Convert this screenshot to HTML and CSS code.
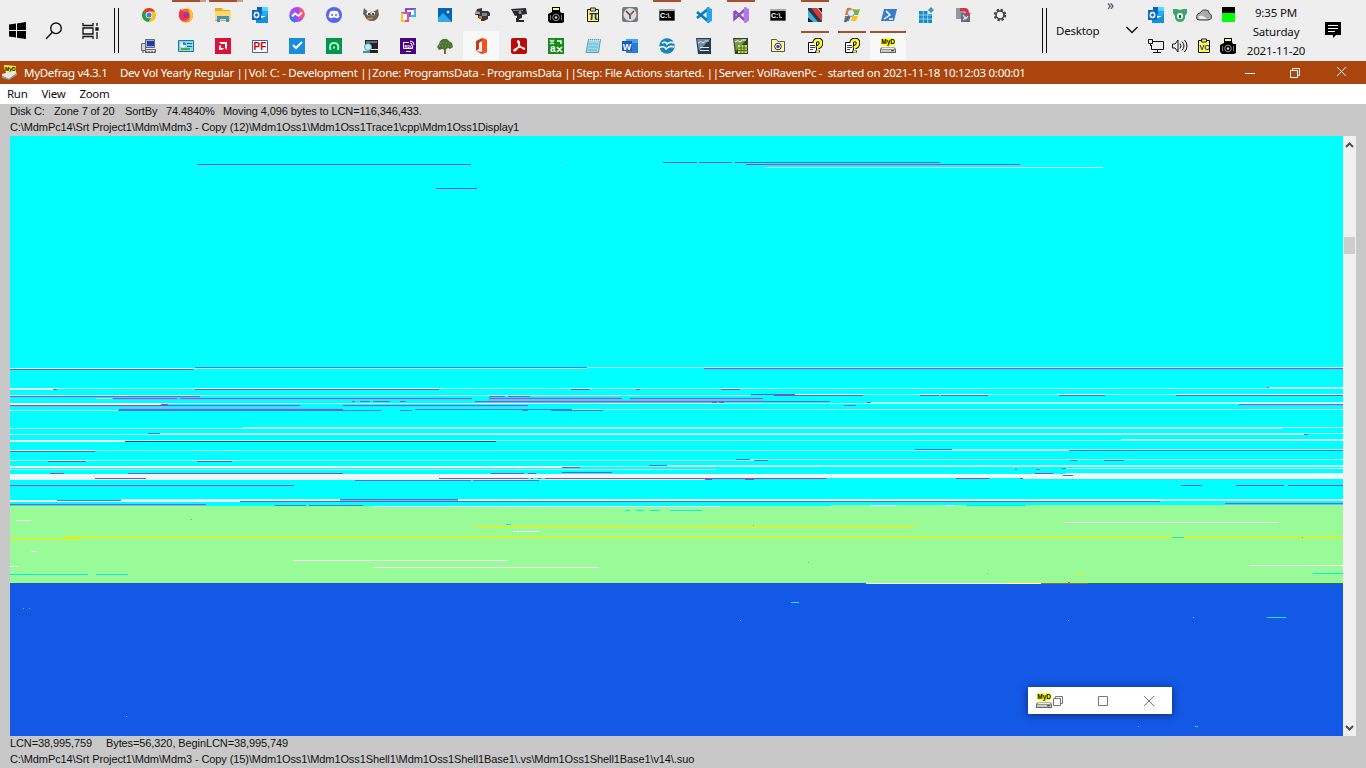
FILE: index.html
```
<!DOCTYPE html>
<html lang="en">
<head>
<meta charset="utf-8">
<title>MyDefrag v4.3.1</title>
<link rel="stylesheet" href="styles.css">
</head>
<body>
<svg class="defs" width="16" height="16">
  <symbol id="outlook" viewBox="0 0 16 16"><path fill="#28a8ea" d="M5 0h11v9H5z"/><path fill="#0364b8" d="M5 0h5v7H5z"/><path fill="#50d9ff" d="M10 0h6v4h-6z"/><path fill="#1490df" d="M4 8l6 3 6-3v8H4z"/><path fill="#0f68c4" d="M0 3h9v10H0z"/><ellipse cx="4.500" cy="8" rx="2.200" ry="2.500" fill="none" stroke="#fff" stroke-width="1.400"/></symbol>
  <symbol id="cmd" viewBox="0 0 16 16"><path fill="#aaa" d="M0 2h16v12H0z"/><path d="M.5 4h15v9.500H.5z"/><text x="1" y="11" class="t" font-size="7" fill="#fff">C:\.</text></symbol>
  <symbol id="photocam" viewBox="0 0 16 16"><path d="M4 0h8v4l1 2h3v9l-2 1H2l-2-2V7l4-2z"/><path fill="#ffff50" d="M5 1h6v2H5z"/><path fill="#777" d="M2 8h1v5H2zM13 8h1v5h-1z"/><circle cx="8" cy="10.500" r="3.300" stroke="#999"/><circle cx="8" cy="10.500" r="1.200" fill="#ddd"/></symbol>
  <symbol id="clip" viewBox="0 0 16 16"><path stroke="#111" fill="#ff3" d="M2.500 2.500h11v12h-11z"/><path fill="#ddd" stroke="#222" d="M5.500 1h5v3h-5z"/></symbol>
  <symbol id="help" viewBox="0 0 16 16"><path fill="#fff" stroke="#000" d="M1.500 4.500h8v10h-8z"/><path stroke="#444" d="M3 7.500h5M3 9.500h5M3 11.500h3"/><path fill="none" stroke="#000" stroke-width="4.500" d="M7.500 5Q8 2 11 2t3 3-3 4v1M10.500 12.500v2"/><path fill="none" stroke="#ff2" stroke-width="2.700" d="M7.500 5Q8 2 11 2t3 3-3 4v1M10.500 12.500v2"/></symbol>
  <symbol id="myd" viewBox="0 0 16 16"><rect x="1" y="0" width="14" height="8" rx="3" fill="#ff1"/><text x="1.300" y="6" class="t" font-size="6.500">MyD</text><path d="M1 9.500h14l1 2V15H0v-3.500z" fill="#666"/><path d="M2 10h12l.5 1h-13z" fill="#eee"/><path d="M1 11.500h14V14H1z" fill="#c9cbc4"/><path stroke="#333" d="M11 12.700h3"/></symbol>
</svg>

<header class="taskbar">
  <div class="system">
    <svg width="17" height="17" viewBox="0 0 17 17"><path d="M0 2.500l7-1V8H0zM8 1.400L17 0v8H8zM0 9h7v6.500l-7-1zM8 9h9v8l-9-1.300z"/></svg>
    <svg width="18" height="18" viewBox="0 0 18 18" fill="none" stroke="#111" stroke-width="1.400"><circle cx="11" cy="6.300" r="5.300"/><path d="M7.300 10.300L1 17"/></svg>
    <svg width="18" height="16" viewBox="0 0 18 16" fill="none" stroke="#111" stroke-width="1.300"><path d="M1 0v2.500h10V0M1 16v-2.500h10V16M1 5h10v6H1zM15 0v3M15 9v7"/><path fill="#111" d="M14 5h2v2h-2z"/></svg>
  </div>
  <i class="grip"></i>
  <div class="icons">
    <span><svg viewBox="0 0 16 16"><circle cx="8" cy="8" r="7" fill="#fbc116"/><path fill="#e33b2e" d="M8 8L2 4.500A7 7 0 0 1 14 4.500H8z"/><path fill="#28994b" d="M8 8L2 4.500A7 7 0 0 0 7.500 15L11 9z"/><circle cx="8" cy="8" r="3.300" fill="#fff"/><circle cx="8" cy="8" r="2.500" fill="#3e7ee8"/></svg></span>
    <span class="open more"><svg viewBox="0 0 16 16"><circle cx="8" cy="8.500" r="7" fill="#ff6a18"/><path fill="#ffc629" d="M9 0q5 3 6 8c0 5-4 7-7 7 3-1 5-4 4-7q0-4-3-8"/><circle cx="7.500" cy="8.500" r="3.500" fill="#7943c5"/><path fill="#f6304c" d="M1 6q1-4 2-4 1 3 5 3-3 2-3 4 2 3 6 1-3 5-8 3-3-3-2-7"/></svg></span>
    <span class="open more"><svg viewBox="0 0 16 16"><path fill="#e9a725" d="M0 1h7l1 2h7v11H0z"/><path fill="#ffd966" d="M0 4h16v9H0z"/><path fill="#3c91d0" d="M2 15V9h12v6h-3v-3H5v3z"/></svg></span>
    <span><svg><use href="#outlook"/></svg></span>
    <span><svg viewBox="0 0 16 16"><circle cx="8" cy="7.500" r="7.500" fill="#a44cfb"/><path fill="#fa5674" d="M10 0q7 3 5 10l-5 2z"/><path fill="#2d7cf6" d="M0 8q1 7 5 7v1l3-2-5-5z"/><path fill="none" stroke="#fff" stroke-width="1.800" d="M3 9.500l3-3 3.500 2.300L13 5.500"/></svg></span>
    <span><svg viewBox="0 0 16 16"><circle cx="8" cy="8" r="8" fill="#5865f2"/><path fill="#fff" d="M4 4.500l3-.7h2l3 .7 1.500 5.500-3 1.500-1-1h-3l-1 1-3-1.500z"/><circle cx="6" cy="8" r="1" fill="#5865f2"/><circle cx="10" cy="8" r="1" fill="#5865f2"/></svg></span>
    <span><svg viewBox="0 0 16 16"><path fill="#66615b" d="M1 1l4 4q5 1 10-3l1 6q-2 6-7 6Q3 14 2 9L0 7z"/><circle cx="5.500" cy="6.500" r="2" fill="#fff"/><circle cx="10" cy="6.500" r="2" fill="#fff"/><circle cx="6" cy="7" r="1"/><circle cx="10" cy="7" r="1"/><path stroke="#e58a20" stroke-width="1.500" d="M4 12l6-1"/></svg></span>
    <span><svg viewBox="0 0 16 16" fill="none"><path fill="#fff" stroke="#8b48df" stroke-width="2" d="M6 2h9v7h-5V6H6z"/><path stroke="#35bde8" stroke-width="2" d="M15 2v7h-5"/><path fill="#fff" stroke="#e5509a" stroke-width="2" d="M2 6h6v8H2z"/><path stroke="#eec824" stroke-width="2" d="M2 6v8h3"/></svg></span>
    <span><svg viewBox="0 0 16 16"><path fill="#0664b8" d="M1 1h14v14H1z"/><path fill="#2daced" d="M1 11l5-5 9 9H1z"/><circle cx="11" cy="5" r="1.200" fill="#fff"/></svg></span>
    <span><svg viewBox="0 0 16 16"><path fill="#39363b" d="M3 2l5-1v3h6l2 2v3h-2v3l-4 2H7v-3H4V8H1z"/><path fill="#b9956d" d="M1 4l5 1v2H2z"/><path fill="#7484a5" d="M8 6h5v3H8z"/><path fill="#c37b2c" d="M5 9h3v3H5z"/></svg></span>
    <span><svg viewBox="0 0 16 16"><path fill="#29292b" d="M0 2l15-1 1 6-12 2zM6 8h5v3l-3 1v1h5v2H5v-4h1z"/><path fill="#777" d="M2 3h10v1H2z"/><circle cx="9" cy="5.500" r="1.500" fill="#99a"/></svg></span>
    <span><svg><use href="#photocam"/></svg></span>
    <span><svg viewBox="0 0 16 16"><use href="#clip" width="16" height="16"/><text x="4" y="13" class="t" font-size="12" fill="#1919d0">π</text></svg></span>
    <span><svg viewBox="0 0 16 16"><rect width="16" height="15" rx="2" fill="#787b80"/><circle cx="8" cy="7.500" r="6.500" fill="#ddd"/><path fill="none" stroke="#444" stroke-width="1.500" d="M4 4l4 4 4-4M8 8v4"/><path stroke="#e36631" d="M8 8l4-3"/></svg></span>
    <span class="open"><svg><use href="#cmd"/></svg></span>
    <span><svg viewBox="0 0 16 16"><path fill="none" stroke="#087bc2" stroke-width="2.700" d="M1 5l11 9V2L1 11"/><path fill="#24a6ef" d="M11 0l5 2v12l-5 2z"/></svg></span>
    <span class="open"><svg viewBox="0 0 16 16"><path fill="none" stroke="#8a4fc5" stroke-width="2.500" d="M1.500 4v8L12 2.500v11L1.500 4"/><path fill="#b17be8" d="M11 0l5 2v12l-5 2z"/></svg></span>
    <span><svg><use href="#cmd"/></svg></span>
    <span class="open"><svg viewBox="0 0 16 16"><path fill="#24394a" d="M1 1h5l9 9v5h-5L1 6z"/><path fill="#d83c31" d="M4 1h6l5 6v8z"/><path fill="#3cb1d9" d="M1 3l10 12H5L1 9z"/><path fill="#16202a" d="M1 10l5 5H1zM11 1h4v5z"/></svg></span>
    <span><svg viewBox="0 0 16 16"><path fill="#f26a29" d="M3 1q3-1 5 1L7 8H1z"/><path fill="#75b72a" d="M9 2q4 1 7 0l-2 6H8z"/><path fill="#3c8dd2" d="M1 9h6l-2 5-5 1z"/><path fill="#ffbf21" d="M8 9h6l-2 5H7z"/><circle cx="7" cy="6" r="3.500" fill="#dcf3ff" stroke="#8b999f"/><path stroke="#81562e" stroke-width="2" d="M5 9l-4 6"/></svg></span>
    <span><svg viewBox="0 0 16 16"><path fill="#397bd0" d="M3 2h13l-3 12H0z"/><path fill="none" stroke="#fff" stroke-width="1.500" d="M5 4l4 4-6 4M8 12h4"/></svg></span>
    <span><svg viewBox="0 0 16 16"><path fill="#168dca" d="M1 4h9v3h4v9H1z"/><path fill="#3295c4" d="M13 0l3 3-3 3-3-3z"/><path stroke="#bceaff" stroke-width=".7" d="M1 8h13M1 12h13M5.300 4v12M9.700 4v12"/></svg></span>
    <span><svg viewBox="0 0 16 16"><path fill="#9297a4" d="M1 1h8v11H1z"/><path fill="#666c7e" d="M6 6h9v9H6z"/><path fill="#d7344c" d="M5 1h6q3 1 3 5h2l-3 3-4-3h2q0-2-6-2z"/><path fill="none" stroke="#ddd" stroke-width="1.300" d="M8 8l3 4 2-3M8 13l3-3"/></svg></span>
    <span><svg viewBox="0 0 16 16"><circle cx="8" cy="8" r="5" fill="none" stroke="#444" stroke-width="2.500" stroke-dasharray="2.300 1.627"/><circle cx="8" cy="8" r="3.900" fill="none" stroke="#444" stroke-width="1.500"/></svg></span>

    <span><svg viewBox="0 0 16 16"><path fill="#a9b3c1" stroke="#667" d="M4.500 1.500h9v8h-9z"/><path fill="#183dbd" d="M6 3h7v5H6z"/><path fill="#d6d6cc" stroke="#667" d="M.5 5.500h4v7h-4zM4.500 11.500h10v3h-10z"/><path stroke="#445" stroke-dasharray="2 1" d="M1 14h13"/></svg></span>
    <span><svg viewBox="0 0 16 16"><path fill="#86d8f3" stroke="#1878ac" d="M.5 2.500h15v11H.5z"/><circle cx="5" cy="7" r="2.500" fill="#fff"/><path fill="#2080bf" d="M5 4a3 3 0 0 1 3 3H5z"/><path stroke="#255e91" d="M9 5.500h5M9 8.500h5"/><path stroke="#59a72a" stroke-width="2" d="M3 11h9"/></svg></span>
    <span><svg viewBox="0 0 16 16"><path fill="#db1238" d="M0 0h16v16H0z"/><path fill="#fff" d="M4 4h8v8l-2-2V6H6zM4 8l2-1v3h3l-2 2H4z"/></svg></span>
    <span><svg viewBox="0 0 16 16"><path fill="#fff" stroke="#3269b4" d="M.5 2.500h15v12H.5z"/><text x="1.500" y="12" class="t" font-size="10" fill="#d00">PF</text></svg></span>
    <span><svg viewBox="0 0 16 16"><path fill="#188ddb" d="M0 0h16v16H0z"/><path fill="none" stroke="#fff" stroke-width="2" d="M4 7l3 3 6-6"/></svg></span>
    <span><svg viewBox="0 0 16 16"><path fill="#00964b" d="M0 0h16v16H0z"/><path fill="none" stroke="#aef2c9" stroke-width="2" d="M4.500 12q-2-7 3.500-7t4 7M8 8.500v2"/></svg></span>
    <span><svg viewBox="0 0 16 16"><path fill="#202329" d="M2 2h13v9H2zM5 12h10v3H5z"/><path fill="#666d72" d="M3 3h11v2H3z"/><circle cx="5" cy="9" r="3.500" fill="#bcecfa" stroke="#6898a7"/><path fill="#4298a8" d="M0 13h7v2H0z"/></svg></span>
    <span><svg viewBox="0 0 16 16"><path fill="#4b0082" d="M0 0h16v16H0z"/><path fill="none" stroke="#fff" d="M9 4.500H3.500v6h9V8M6 13.500h5M10 5q2 0 2 2M10 3q4 0 4 4"/><text x="4.500" y="9.500" class="t" font-size="4" fill="#fff">RDC</text></svg></span>
    <span><svg viewBox="0 0 16 16"><path stroke="#80613c" stroke-width="2" d="M8 7v9"/><path fill="#4d7432" d="M6 1l4 0 2 2 3 2 1 4-3 2-2-1-3 2-3-1-3 1-2-3 2-3 1-3z"/><path stroke="#8ca55b" stroke-dasharray="1 2" d="M3 5h10M2 8h12"/></svg></span>
    <span class="lit"><svg viewBox="0 0 16 16"><path fill="#c93a16" d="M9 0l5 2v12l-5 2-6-3 6 1V3L6 5v6l-3 2V3z"/><path fill="#f4511e" d="M9 0l5 2v12l-5 2z"/></svg></span>
    <span><svg viewBox="0 0 16 16"><rect width="16" height="16" rx="2" fill="#b90b08"/><path fill="none" stroke="#fff" stroke-width="1.300" d="M7 3c3 0 1 6-2 9-2 2-3 0-1-1 3-2 7-2 9-1 2 2-2 1-4-2C7 5 6 3 7 3"/></svg></span>
    <span><svg viewBox="0 0 16 16"><path fill="#168a1b" d="M0 0h16v16H0z"/><text x="2" y="14" class="t" font-size="10" fill="#fff">a</text><path fill="none" stroke="#fff" stroke-width="1.500" d="M2 2l4 4M6 2L2 6M9 3h4v3M9 9l5 5M14 9l-5 5"/></svg></span>
    <span><svg viewBox="0 0 16 16"><path fill="#9bdbe9" stroke="#6a9aaa" d="M3.500 1.500h12l-2 13H1z"/><path stroke="#fff" stroke-dasharray="1 1" d="M4 2h11"/><path stroke="#68b5ca" d="M4 6h9M3.500 9h9M3 12h9"/></svg></span>
    <span><svg viewBox="0 0 16 16"><path fill="#2b7cd3" d="M4 1h12v14H4z"/><path fill="#41a5ee" d="M4 1h12v4H4z"/><path fill="#185abd" d="M0 3h10v10H0z"/><text x=".7" y="11.500" class="t" font-size="9" fill="#fff">W</text></svg></span>
    <span><svg viewBox="0 0 16 16"><circle cx="8" cy="8" r="7.700" fill="#1685bb"/><path fill="none" stroke="#fff" stroke-width="1.600" d="M3 5q4-2 5 1 3-3 7-1M0 10q5-3 7 1 4-4 8-2"/></svg></span>
    <span><svg viewBox="0 0 16 16"><path fill="#263d4d" d="M0 0h15v16H2z"/><path fill="#738da1" d="M1 1h13L3 13z"/><path stroke="#dce6eb" d="M4 9.500h9M4 12.500h9M2 5q3-3 5 0 2-3 6-2" fill="none"/></svg></span>
    <span><svg viewBox="0 0 16 16"><path fill="#32442b" d="M0 0h15v16H2z"/><path fill="#789456" d="M1 1h13L3 13z"/><path fill="#c7e23f" d="M5 7h9v8H5z"/><path stroke="#426129" d="M5 10h9M5 12.500h9M8 7v8M11 7v8"/><path fill="none" stroke="#fff" d="M2 4q3-3 5 0 2-3 6-2"/></svg></span>
    <span><svg viewBox="0 0 16 16"><path fill="#ffff9b" stroke="#555" d="M1.500 4V1.500h5L8 3.500h6.500v10h-13z"/><circle cx="8" cy="8.500" r="3.300" fill="#fff" stroke="#223"/><circle cx="8" cy="8.500" r="1.800" fill="#3b49c2"/></svg></span>
    <span class="open"><svg><use href="#help"/></svg></span>
    <span class="open"><svg><use href="#help"/></svg></span>
    <span class="open lit"><svg><use href="#myd"/></svg></span>
  </div>
  <i class="grip second"></i>
  <span class="desktop">Desktop</span>
  <svg class="chevron" width="12" height="8" viewBox="0 0 12 8" fill="none" stroke="#111" stroke-width="1.300"><path d="M.5 1L6 6.500 11.500 1"/></svg>
  <span class="overflow">»</span>
  <div class="tray">
    <svg><use href="#outlook"/></svg>
    <svg viewBox="0 0 16 16"><path fill="#38a969" d="M1 2h4l3 1 3-1h4v4l-2 3v2q-1 4-5 4T3 11V9L1 6z"/><circle cx="8" cy="9" r="3" fill="#fff"/><path fill="#235d3d" d="M7 8h2v3H7z"/></svg>
    <svg viewBox="0 0 16 16"><path fill="#aaa" stroke="#444" d="M3 13Q0 13 .5 9.500T4 6q2-4 6-3 3 0 3 3 3 1 2.500 5-1 2-3.500 2z"/><path fill="#eee" d="M2 10q3-4 9 2H4z"/></svg>
    <svg viewBox="0 0 16 16"><path d="M2 0h13v6H2z"/><path fill="#0f0" d="M2 6h13v9H2z"/></svg>
    <svg viewBox="0 0 16 16" fill="none" stroke="#111"><path d="M5 3.500h10.500v8H3.500V7M.5 1.500h4v4h-4zM2.500 6v2M9.500 12v2M5 14.500h8"/></svg>
    <svg viewBox="0 0 16 16" fill="none" stroke="#111"><path d="M.5 6H3l3-4v12l-3-4H.5zM8 5.500q2 2.500 0 5M10 3.500q4 4.500 0 9M12.500 2q5 6 0 12"/></svg>
    <svg viewBox="0 0 16 16"><use href="#clip" width="16" height="16"/><text x="3.500" y="12" class="t" font-size="7" fill="#2020c0">VC</text></svg>
    <svg><use href="#photocam"/></svg>
  </div>
  <div class="clock"><span class="time">9:35 PM</span><span class="day">Saturday</span><span class="date">2021-11-20</span></div>
  <svg class="note" width="16" height="16" viewBox="0 0 16 16"><path d="M0 0h16v13h-5l-3 3v-3H0z"/><path stroke="#fff" d="M3 3.500h10M3 6.500h10M3 9.500h7"/></svg>
</header>

<main class="window">
  <div class="titlebar">
    <svg class="appicon" viewBox="0 0 16 16"><path fill="#eef08a" d="M2 0l12 1v7H4z"/><path fill="#ffeb19" d="M2 1h12v5H3z"/><text x="3" y="5.500" class="t" font-size="5">MyD</text><path fill="#e7e7df" d="M0 9l11-3 4 2-8 6-7-3z"/><path fill="#999" d="M0 11l7 3 8-6v2l-8 5-7-2z"/></svg>
    <span class="name">MyDefrag v4.3.1</span><span class="job">Dev Vol Yearly Regular ||Vol: C: - Development ||Zone: ProgramsData - ProgramsData ||Step: File Actions started. ||Server: VolRavenPc -&nbsp; started on 2021-11-18 10:12:03 0:00:01</span>
    <svg class="controls" width="104" height="12" viewBox="0 0 104 12" fill="none" stroke="#fff"><path d="M0 6.500h10M45.500 3.500h7v7h-7zM47.500 3V1.500h7v7H53M92 0l9 9M101 0l-9 9"/></svg>
  </div>
  <nav class="menu"><span>Run</span><span>View</span><span>Zoom</span></nav>
  <section class="status top">
    <p><span class="disk">Disk C:</span><span class="zone">Zone 7 of 20</span><span class="sort">SortBy</span><span class="pct">74.4840%</span><span class="moving">Moving 4,096 bytes to LCN=116,346,433.</span></p>
    <p><span class="path1">C:\MdmPc14\Srt Project1\Mdm\Mdm3 - Copy (12)\Mdm1Oss1\Mdm1Oss1Trace1\cpp\Mdm1Oss1Display1</span></p>
  </section>
  <div class="mapwrap">
    <svg class="map" width="1333" height="600" viewBox="10 136 1333 600" fill="none" shape-rendering="crispEdges">
      <path fill="#0ff" d="M10 136h1333v370H10z"/>
      <path fill="#98fb98" d="M10 506h1333v77H10zM830 505h513v1H830zM96 398h16v1H96z"/>
      <path fill="#1458e6" d="M10 584h1333v152H10z"/>
      <path stroke="#1458e6" d="M10 583.500h1333"/>
      <!-- free clusters -->
      <path stroke="#c9ffff" d="M765 167.500h338M10 368.500h577M587 367.500h756M10 388.500h1333M1268 387.500h75M10 395.500h741M751 394.500h592M10 403.500h1333M868 402.500h475M10 410.500h108M572 409.500h771M10 428.500h1272M243 427.500h1100M10 434.500h1298M160 433.500h1183M10 440.500h1333M1121 439.500h222M10 450.500h1059M952 449.500h391M10 460.500h744M750 459.500h593M10 466.500h1333M667 465.500h676M10 469.500h706M1066 468.500h277M1066 473.500h277M10 500.500h1333M121 499.500h1222M561 160.500h1"/>
      <path fill="#f0f5f8" d="M10 388h43v2H10zM10 403h151v2H10zM10 440h115v2H10zM10 466h552v2H10zM10 474h1333v4H10zM10 478h429v2H10zM439 479h266v1H439zM1023 478h320v1h-320zM10 500h230v2H10z"/>
      <path stroke="#70bdf0" d="M704 369.500h639M10 397.500h190M489 397.500h133M113 399.500h359M489 399.500h133M630 399.500h133M489 400.500h274M475 402.500h237M10 406.500h290M1239 405.500h104M343 406.500h185M119 408.500h224M10 486.500h284M340 500.500h118M1225 504.500h118M10 505.500h196"/>
      <!-- fragmented files -->
      <path stroke="#4b75d8" d="M195 367.500h392M704 368.500h639M10 396.500h190M113 398.500h64M180 398.500h292M489 398.500h133M630 398.500h133M489 396.500h16M508 396.500h22M352 401.500h3M360 401.500h10M373 401.500h17M400 401.500h6M475 401.500h355M168 405.500h132M343 405.500h185M844 405.500h12M1239 404.500h104M119 409.500h224M118 410.500h263M400 410.500h12M415 409.500h157M522 410.500h6M551 410.500h52M148 433.500h12M1304 434.500h4M915 449.500h37M1069 450.500h274M736 459.500h14M754 460.500h14M1070 460.500h7M1104 460.500h20M649 465.500h18M1015 469.500h2M1036 469.500h4M1062 468.500h4M340 499.500h118M57 500.500h64M10 485.500h284M10 504.500h196M275 505.500h31M309 505.500h54M1225 503.500h118M355 480.500h116M473 480.500h66"/>
      <path stroke="#8450bd" d="M197 164.500h274M436 188.500h41M663 162.500h34M699 162.500h33M735 162.500h205M746 164.500h274M10 369.500h183M53 389.500h4M195 389.500h244M571 389.500h19M636 389.500h4M721 389.500h19M1267 387.500h2M774 395.500h89M751 394.500h44M920 395.500h19M941 395.500h47M1059 395.500h46M1176 395.500h167M712 402.500h5M719 402.500h5M867 402.500h4M161 404.500h7M10 405.500h158M10 451.500h85M48 461.500h38M197 461.500h35M562 467.500h18M50 473.500h14M128 473.500h215M491 473.500h33M528 473.500h8M562 472.500h50M1035 473.500h18M95 478.500h51M439 478.500h89M531 478.500h2M538 478.500h3M545 478.500h281M705 479.500h7M745 479.500h9M956 478.500h33M1020 478.500h3M1063 475.500h10M1181 485.500h21M1236 485.500h48M1288 485.500h55M240 501.500h920"/>
      <path stroke="#0751a8" d="M125 441.500h371"/>
      <!-- regular files -->
      <path stroke="#f5fff0" d="M373 506.500h347M871 505.500h25M945 505.500h10M16 520.500h15M1064 522.500h215M513 531.500h26M31 551.500h5M293 560.500h215M373 567.500h226M10 566.500h9M1249 565.500h94M866 583.500h175"/>
      <path stroke="#00edf2" d="M10 574.500h78M96 574.500h32M1313 573.500h30M625 510.500h5M636 510.500h8M650 510.500h10M670 510.500h32M506 524.500h5M966 505.500h60"/>
      <path fill="#c4f552" d="M475 526h440v2H475zM10 538h70v2H10zM64 536h1279v2H64z"/>
      <path stroke="#e6ea20" d="M475 526.500h440M10 538.500h70M64 537.500h1279M1076 574.500h9M1006 582.500h35M590 579.500h1"/>
      <path stroke="#00edf2" d="M1172 537.500h12"/>
      <path stroke="#70c889" d="M190 519.500h2M753 525.500h1M808 562.500h1M987 573.500h1M1302 537.500h1"/>
      <path stroke="#26734e" d="M1088 583.500h255"/>
      <path stroke="#8c6c38" d="M1041 583.500h47M1068 582.500h2"/>
      <path stroke="#1ae6ee" d="M791 602.500h8M1267 617.500h19M1195 726.500h3"/>
      <path stroke="#92b4ff" d="M23 608.500h1M29 608.500h1M740 620.500h1M1068 620.500h1M1193 617.500h1M126 716.500h1M1138 726.500h1"/>
    </svg>
    <div class="scroll">
      <svg width="9" height="6" viewBox="0 0 9 6" fill="none" stroke="#505050" stroke-width="2"><path d="M1 5l3.500-3.500L8 5"/></svg>
      <i class="thumb"></i>
      <svg width="9" height="6" viewBox="0 0 9 6" fill="none" stroke="#505050" stroke-width="2"><path d="M1 1l3.500 3.500L8 1"/></svg>
    </div>
    <div class="mini">
      <svg width="16" height="16"><use href="#myd"/></svg>
      <svg width="104" height="12" viewBox="0 0 104 12" fill="none" stroke="#777"><path d="M1.500 3.500h7v7h-7zM3.500 3V1.500h7v7H9M46.500 1.500h9v9h-9zM92 1l10 10M102 1L92 11"/></svg>
    </div>
  </div>
  <section class="status bottom">
    <p><span class="lcn">LCN=38,995,759</span><span class="bytes">Bytes=56,320, BeginLCN=38,995,749</span></p>
    <p><span class="path2">C:\MdmPc14\Srt Project1\Mdm\Mdm3 - Copy (15)\Mdm1Oss1\Mdm1Oss1Shell1\Mdm1Oss1Shell1Base1\.vs\Mdm1Oss1Shell1Base1\v14\.suo</span></p>
  </section>
</main>
</body>
</html>
```
FILE: styles.css
```
* { box-sizing: border-box; }
body { margin: 0; width: 1366px; height: 768px; overflow: hidden; background: #c8c8c8; color: #111; font: 11.5px "Noto Sans", sans-serif; letter-spacing: -.3px; }
p { margin: 0; }
.defs { position: absolute; visibility: hidden; }
.t { font-family: "Liberation Sans", sans-serif; font-weight: bold; letter-spacing: 0; }
.taskbar { position: relative; display: flex; height: 61px; background: #eee; }
.taskbar > * { flex: none; }
.system { width: 114px; display: flex; align-items: center; gap: 19px; padding-left: 9px; }
.grip { width: 5px; height: 45px; margin-top: 8px; border: solid #111; border-width: 0 1px; }
.icons { margin-left: 11px; width: 888px; display: grid; grid-template-columns: repeat(24, 37px); grid-template-rows: 31px 30px; }
.icons > span { position: relative; display: flex; align-items: center; justify-content: center; }
.icons > span:nth-child(-n+24) { padding-bottom: 1px; }
.icons svg { width: 16px; height: 16px; }
.open::before { content: ""; position: absolute; top: 0; left: 5px; width: 28px; height: 2px; background: #a6502d; }
.more::before { border-right: 6px solid #cc9c84; }
.lit { background: #f8f8f8; margin-right: 1px; }
.open.lit::before { left: 0; width: 36px; }
.second { margin-left: 24px; }
.desktop { margin: 22px 0 0 9px; width: 70px; line-height: 17px; letter-spacing: -.2px; }
.chevron { margin-top: 26px; }
.overflow { position: absolute; left: 1107px; top: 0; color: #446; font-size: 14px; line-height: 10px; height: 14px; }
.tray { margin-left: 6px; width: 96px; display: grid; grid-template-columns: repeat(4, 24px); grid-template-rows: 30px 31px; align-items: center; justify-items: center; }
.tray svg { width: 16px; height: 16px; }
.clock { width: 72px; display: flex; flex-direction: column; align-items: center; padding-top: 3px; line-height: 19px; letter-spacing: -.15px; }
.note { margin: 22px 0 0 13px; }
.titlebar { display: flex; align-items: center; height: 23px; background: #ab450e; color: #fff; white-space: nowrap; }
.appicon { width: 16px; height: 16px; margin: 0 6px 0 2px; }
.name { width: 96px; }
.controls { margin-left: auto; margin-right: 17px; }
.menu { display: flex; gap: 14px; height: 20px; padding-left: 7px; background: #fff; line-height: 20px; }
.status { padding-left: 10px; font: 11px/16px "Liberation Sans", sans-serif; letter-spacing: -.1px; white-space: nowrap; }
.status p { display: flex; height: 16px; }
.status.top { margin-top: -1px; height: 33px; }
.status.bottom { margin-top: -1px; height: 33px; }
.mapwrap { position: relative; display: flex; padding-left: 10px; height: 600px; }
.map { display: block; }
.scroll { width: 13px; background: #f0f0f0; display: flex; flex-direction: column; align-items: center; padding: 6px 0 5px; }
.thumb { width: 11px; height: 17px; margin: 89px 0 auto; background: #cdcdcd; }
.mini { position: absolute; left: 1028px; top: 551px; width: 144px; height: 27px; background: #fff; box-shadow: 0 1px 8px #0008; display: flex; align-items: center; padding-left: 8px; }
.disk { width: 44px; } .zone { width: 71px; } .sort { width: 41px; } .pct { width: 57px; } .lcn { width: 96px; }
```
